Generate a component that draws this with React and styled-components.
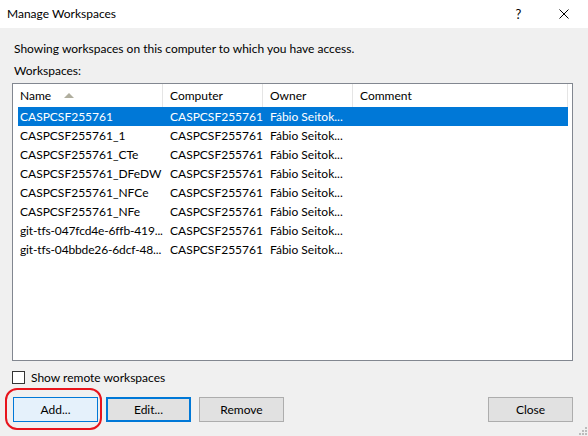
import React from 'react';
import styled, { createGlobalStyle } from 'styled-components';

const GlobalStyle = createGlobalStyle`
  html, body {
    margin: 0;
    padding: 0;
    background: #f0f0f0;
  }
  * {
    box-sizing: border-box;
  }
`;

const Window = styled.div`
  position: relative;
  width: 588px;
  height: 436px;
  display: flex;
  flex-direction: column;
  background: #f0f0f0;
  font-family: Lato, 'Liberation Sans', Arial, sans-serif;
  font-size: 12px;
  color: #000;
  overflow: hidden;
`;

const TitleBar = styled.div`
  height: 28px;
  display: flex;
  align-items: center;
  background: #fff;
  padding-left: 7px;
  padding-bottom: 1px;
`;

const Title = styled.div`
  flex: 1;
  font-size: 12px;
`;

const TitleButton = styled.div`
  width: 45px;
  height: 27px;
  display: flex;
  align-items: center;
  justify-content: center;
  font-size: 13px;
  &:last-child {
    margin-right: 2px;
  }
`;

const Body = styled.div`
  flex: 1;
  display: flex;
  flex-direction: column;
  padding: 13px 15px 0 12px;
`;

const Label = styled.div`
  line-height: 16px;
  padding-left: ${p => p.$indent || 0}px;
  margin-bottom: ${p => p.$gap || 0}px;
`;

const ListBox = styled.div`
  height: 278px;
  margin-top: 4px;
  border: 1px solid #828790;
  background: #fff;
  display: flex;
  flex-direction: column;
`;

const Header = styled.div`
  display: flex;
  height: 23px;
`;

const HeaderCell = styled.div`
  width: ${p => p.$w ? `${p.$w}px` : 'auto'};
  flex: ${p => p.$w ? 'none' : 1};
  display: flex;
  align-items: center;
  padding-left: 7px;
  border-right: 1px solid #e5e5e5;
  white-space: nowrap;
  &:last-child {
    margin-right: 4px;
  }
`;

const SortArrow = styled.span`
  display: inline-block;
  margin-left: 13px;
  margin-top: -1px;
  width: 0;
  height: 0;
  border-left: 5px solid transparent;
  border-right: 5px solid transparent;
  border-bottom: 5px solid #b0ae9e;
`;

const Rows = styled.div`
  display: flex;
  flex-direction: column;
  padding-left: 5px;
  padding-right: 4px;
`;

const Row = styled.div`
  display: flex;
  height: 19px;
  align-items: center;
  background: ${p => p.$selected ? '#0078d7' : 'transparent'};
  color: ${p => p.$selected ? '#fff' : '#000'};
`;

const Cell = styled.div`
  width: ${p => p.$w ? `${p.$w}px` : 'auto'};
  flex: ${p => p.$w ? 'none' : 1};
  padding-left: ${p => p.$pad}px;
  white-space: nowrap;
  overflow: visible;
  letter-spacing: ${p => p.$tight ? '-0.15px' : 'normal'};
`;

const CheckRow = styled.label`
  display: flex;
  align-items: center;
  margin-top: 9px;
  height: 14px;
`;

const CheckBox = styled.span`
  width: 13px;
  height: 13px;
  border: 1px solid #333;
  background: #fff;
  margin-right: 6px;
`;

const ButtonBar = styled.div`
  display: flex;
  gap: 8px;
  margin-top: 13px;
  padding-left: 1px;
`;

const Button = styled.button`
  width: 85px;
  height: 25px;
  font-family: inherit;
  font-size: 12px;
  color: #000;
  padding: 0;
  background: ${p => p.$hot ? '#e5f1fb' : '#e1e1e1'};
  border: ${p => p.$focus ? '2px solid #0078d7' : p.$hot ? '1px solid #0078d7' : '1px solid #adadad'};
  margin-left: ${p => p.$push ? 'auto' : '0'};
`;

const Annotation = styled.div`
  position: absolute;
  left: 5px;
  top: 388px;
  width: 97px;
  height: 42px;
  border: 2.5px solid #e8141c;
  border-radius: 12px;
  pointer-events: none;
`;

const Grip = styled.svg`
  position: absolute;
  right: 1px;
  bottom: 1px;
`;

const rows = [
  ['CASPCSF255761', true],
  ['CASPCSF255761_1'],
  ['CASPCSF255761_CTe'],
  ['CASPCSF255761_DFeDW'],
  ['CASPCSF255761_NFCe'],
  ['CASPCSF255761_NFe'],
  ['git-tfs-047fcd4e-6ffb-419...'],
  ['git-tfs-04bbde26-6dcf-48...'],
];

export default function App() {
  return (
    <Window>
      <GlobalStyle />
      <TitleBar>
        <Title>Manage Workspaces</Title>
        <TitleButton>?</TitleButton>
        <TitleButton>
          <svg width="10" height="10" viewBox="0 0 10 10">
            <path d="M0.5 0.5 L9.5 9.5 M9.5 0.5 L0.5 9.5" stroke="#000" strokeWidth="1" />
          </svg>
        </TitleButton>
      </TitleBar>
      <Body>
        <Label $indent={2} $gap={6}>Showing workspaces on this computer to which you have access.</Label>
        <Label $indent={2}>Workspaces:</Label>
        <ListBox>
          <Header>
            <HeaderCell $w={150}>Name<SortArrow /></HeaderCell>
            <HeaderCell $w={100}>Computer</HeaderCell>
            <HeaderCell $w={90}>Owner</HeaderCell>
            <HeaderCell>Comment</HeaderCell>
          </Header>
          <Rows>
            {rows.map(([name, sel]) => (
              <Row key={name} $selected={sel}>
                <Cell $w={145} $pad={2} $tight={name.startsWith('git')}>{name}</Cell>
                <Cell $w={100} $pad={7}>CASPCSF255761</Cell>
                <Cell $w={90} $pad={7}>Fábio Seitok...</Cell>
                <Cell $pad={7}></Cell>
              </Row>
            ))}
          </Rows>
        </ListBox>
        <CheckRow>
          <CheckBox />
          Show remote workspaces
        </CheckRow>
        <ButtonBar>
          <Button $hot>Add...</Button>
          <Button $focus>Edit...</Button>
          <Button>Remove</Button>
          <Button $push>Close</Button>
        </ButtonBar>
      </Body>
      <Annotation />
      <Grip width="10" height="10" viewBox="0 0 10 10">
        {[[8, 0], [8, 3], [5, 3], [8, 6], [5, 6], [2, 6]].map(([x, y]) => (
          <rect key={`${x}-${y}`} x={x} y={y + 2} width="2" height="2" fill="#bcbcbc" />
        ))}
      </Grip>
    </Window>
  );
}
